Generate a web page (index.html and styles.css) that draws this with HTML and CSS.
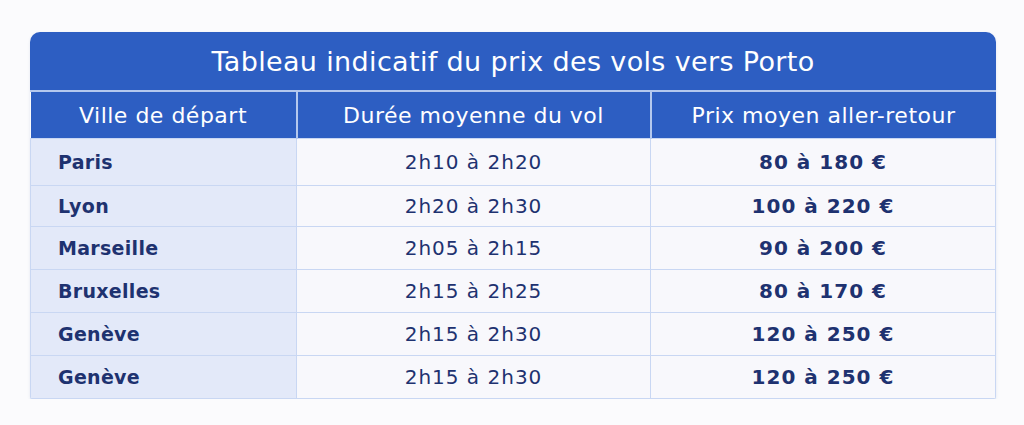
FILE: index.html
```html
<!DOCTYPE html>
<html lang="fr">
<head>
<meta charset="utf-8">
<link rel="stylesheet" href="styles.css">
</head>
<body>
<div class="card">
  <div class="title">Tableau indicatif du prix des vols vers Porto</div>
  <table class="grid">
    <thead>
      <tr><th class="c1">Ville de départ</th><th class="c2">Durée moyenne du vol</th><th class="c3">Prix moyen aller-retour</th></tr>
    </thead>
    <tbody>
      <tr class="r1"><td class="city">Paris</td><td class="dur">2h10 à 2h20</td><td class="price">80 à 180 €</td></tr>
      <tr class="r2"><td class="city">Lyon</td><td class="dur">2h20 à 2h30</td><td class="price">100 à 220 €</td></tr>
      <tr><td class="city">Marseille</td><td class="dur">2h05 à 2h15</td><td class="price">90 à 200 €</td></tr>
      <tr><td class="city">Bruxelles</td><td class="dur">2h15 à 2h25</td><td class="price">80 à 170 €</td></tr>
      <tr><td class="city">Genève</td><td class="dur">2h15 à 2h30</td><td class="price">120 à 250 €</td></tr>
      <tr class="rl"><td class="city">Genève</td><td class="dur">2h15 à 2h30</td><td class="price">120 à 250 €</td></tr>
    </tbody>
  </table>
</div>
</body>
</html>
```
FILE: styles.css
```css
html, body { margin: 0; padding: 0; }
body {
  background: #fbfbfd;
  font-family: "DejaVu Sans", "Open Sans", sans-serif;
  padding: 32px 28px 0 30px;
}
.card {
  width: 966px;
  border-radius: 10px 10px 2px 2px;
  overflow: hidden;
  box-shadow: 0 1px 3px rgba(60, 80, 140, 0.12);
}
.title {
  background: #2d5ec2;
  color: #ffffff;
  height: 58px;
  line-height: 60px;
  text-align: center;
  font-size: 27px;
  letter-spacing: 0.35px;
  border-bottom: 2px solid #b4c8ee;
}
.grid {
  width: 100%;
  border-collapse: collapse;
  table-layout: fixed;
}
.grid th {
  background: #2d5ec2;
  color: #fff;
  font-weight: 400;
  font-size: 22px;
  letter-spacing: 0.5px;
  height: 46px;
  padding: 0;
  text-align: center;
  border-left: 2px solid #b4c8ee;
}
.grid th.c1 { width: 265px; border-left: none; }
.grid th.c2 { width: 352px; }
.grid td {
  height: 42px;
  padding: 0;
  color: #1e3270;
  font-size: 20px;
  letter-spacing: 1px;
  text-align: center;
  border: 1px solid #c9d7f3;
  background: #f8f8fc;
}
.grid tr.r1 td { height: 46px; }
.grid tr.r2 td { height: 40px; }
.grid td.city {
  background: #e3e9f9;
  text-align: left;
  padding-left: 27px;
  font-weight: 700;
  font-size: 19px;
  letter-spacing: 0.3px;
}
.grid td.dur { font-weight: 400; }
.grid td.price { font-weight: 700; }
```
